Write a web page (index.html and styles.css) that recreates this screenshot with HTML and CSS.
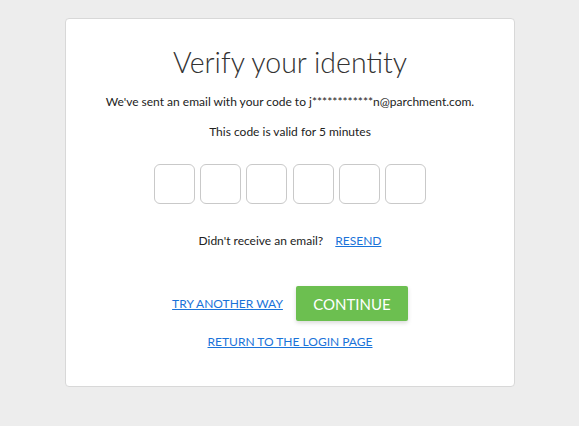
FILE: index.html
```html
<!DOCTYPE html>
<html>
<head>
<meta charset="utf-8">
<link rel="stylesheet" href="styles.css">
</head>
<body>
<div class="card">
  <h1 class="title">Verify your identity</h1>
  <p class="msg">We've sent an email with your code to j************n@parchment.com.</p>
  <p class="msg valid">This code is valid for 5 minutes</p>
  <div class="code">
    <input class="digit" type="text" maxlength="1">
    <input class="digit" type="text" maxlength="1">
    <input class="digit" type="text" maxlength="1">
    <input class="digit" type="text" maxlength="1">
    <input class="digit" type="text" maxlength="1">
    <input class="digit" type="text" maxlength="1">
  </div>
  <p class="msg resend">Didn't receive an email? <a class="link resend-link" href="#">RESEND</a></p>
  <div class="actions">
    <a class="link" href="#">TRY ANOTHER WAY</a>
    <button class="continue" type="button">CONTINUE</button>
  </div>
  <a class="link return" href="#">RETURN TO THE LOGIN PAGE</a>
</div>
</body>
</html>
```
FILE: styles.css
```css
html, body {
  margin: 0;
  padding: 0;
  background: #ededed;
  font-family: Lato, "Open Sans", sans-serif;
  color: #222;
}
body {
  padding: 18px 0 0 65px;
  height: 426px;
  box-sizing: border-box;
}
.card {
  width: 450px;
  height: 369px;
  box-sizing: border-box;
  background: #fff;
  border: 1px solid #d8d8d8;
  border-radius: 4px;
  display: flex;
  flex-direction: column;
  align-items: center;
  padding-top: 26px;
}
.title {
  margin: 0;
  font-size: 28.5px;
  font-weight: 300;
  line-height: 34px;
  color: #333;
}
.msg {
  margin: 15px 0 0;
  font-size: 12px;
  line-height: 16px;
}
.valid {
  margin-top: 14px;
}
.code {
  display: flex;
  gap: 5.2px;
  margin-top: 24px;
}
.digit {
  width: 41px;
  height: 40px;
  box-sizing: border-box;
  border: 1px solid #c9c9c9;
  border-radius: 6px;
  margin: 0;
  padding: 0;
  outline: none;
}
.resend {
  margin-top: 29px;
}
.resend-link {
  margin-left: 9px;
}
.link {
  color: #1a73d9;
  font-size: 12px;
  line-height: 16px;
  text-decoration: underline;
}
.actions {
  display: flex;
  align-items: center;
  gap: 13px;
  margin-top: 37px;
}
.continue {
  width: 112px;
  height: 35px;
  background: #6cbf50;
  border: none;
  border-radius: 2px;
  color: #fff;
  font-family: Lato, sans-serif;
  font-size: 15px;
  box-shadow: 0 2px 4px rgba(0,0,0,0.15);
  padding: 0;
}
.return {
  margin-top: 13px;
}
```
